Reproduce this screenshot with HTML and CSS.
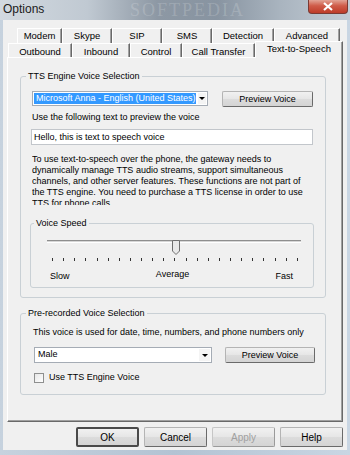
FILE: index.html
```html
<!DOCTYPE html>
<html lang="en">
<head>
    <meta charset="UTF-8">
    <title>Options</title>
    <link rel="stylesheet" href="styles.css">
</head>
<body>
    <div class="window">
        <div class="titlebar">
            <span class="title">Options</span>
            <span class="watermark">SOFTPEDIA</span>
            <div class="close-btn">
                <svg width="12" height="9" viewBox="0 0 12 9">
                    <path d="M2 1 L10 8 M10 1 L2 8" stroke="#fff" stroke-width="2.2" fill="none"/>
                </svg>
            </div>
        </div>

        <div class="client">
            <div class="tabs">
                <div class="tab-row back">
                    <div class="tab t-modem">Modem</div>
                    <div class="tab t-skype">Skype</div>
                    <div class="tab t-sip">SIP</div>
                    <div class="tab t-sms">SMS</div>
                    <div class="tab t-detect">Detection</div>
                    <div class="tab t-adv">Advanced</div>
                </div>
                <div class="tab-row front">
                    <div class="tab t-out">Outbound</div>
                    <div class="tab t-in">Inbound</div>
                    <div class="tab t-ctrl">Control</div>
                    <div class="tab t-xfer">Call Transfer</div>
                    <div class="tab t-tts active">Text-to-Speech</div>
                </div>
            </div>

            <div class="panel">
                <fieldset class="group tts-group">
                    <legend>TTS Engine Voice Selection</legend>
                    <div class="voice-row">
                        <div class="combo engine-combo focused">
                            <span class="combo-text">Microsoft Anna - English (United States)</span>
                            <span class="combo-arrow"></span>
                        </div>
                        <button class="btn preview-btn">Preview Voice</button>
                    </div>
                    <div class="hint">Use the following text to preview the voice</div>
                    <input class="textbox" type="text" value="Hello, this is text to speech voice">
                    <p class="note">
                        To use text-to-speech over the phone, the gateway needs to<br>
                        dynamically manage TTS audio streams, support simultaneous<br>
                        channels, and other server features. These functions are not part of<br>
                        the TTS engine. You need to purchase a TTS license in order to use<br>
                        TTS for phone calls.
                    </p>

                    <fieldset class="group speed-group">
                        <legend>Voice Speed</legend>
                        <div class="slider">
                            <div class="track"></div>
                            <svg class="thumb" width="8" height="15" viewBox="0 0 8 15">
                                <path d="M0.5 0.5 H7.5 V11 L4 14.5 L0.5 11 Z" fill="#e9e9e9" stroke="#6f6f6f"/>
                            </svg>
                        </div>
                        <div class="ticks" id="ticks"></div>
                        <div class="speed-labels">
                            <span>Slow</span>
                            <span class="avg">Average</span>
                            <span>Fast</span>
                        </div>
                    </fieldset>
                </fieldset>

                <fieldset class="group prerec-group">
                    <legend>Pre-recorded Voice Selection</legend>
                    <div class="info">This voice is used for date, time, numbers, and phone numbers only</div>
                    <div class="voice-row prerec-row">
                        <div class="combo male-combo">
                            <span class="combo-text">Male</span>
                            <span class="combo-arrow"></span>
                        </div>
                        <button class="btn preview-btn2">Preview Voice</button>
                    </div>
                    <label class="check-row">
                        <span class="checkbox"></span>
                        Use TTS Engine Voice
                    </label>
                </fieldset>
            </div>

            <div class="buttons">
                <button class="btn dlg-btn default">OK</button>
                <button class="btn dlg-btn">Cancel</button>
                <button class="btn dlg-btn disabled">Apply</button>
                <button class="btn dlg-btn">Help</button>
            </div>
        </div>
    </div>

    <script>
        // 23 tick marks under the speed slider
        const ticks = document.getElementById('ticks');
        for (let i = 0; i < 23; i++) {
            const tick = document.createElement('span');
            tick.className = 'tick';
            ticks.appendChild(tick);
        }
    </script>
</body>
</html>
```

FILE: styles.css
```css
* {
    box-sizing: border-box;
}
body {
    margin: 0;
    font-family: "Liberation Sans", Arial, sans-serif;
    font-size: 9px;
    color: #000;
}
.window {
    width: 350px;
    height: 455px;
    display: flex;
    flex-direction: column;
    background: linear-gradient(90deg, #c6d2de, #b3c3d3 50%, #c9d6e3);
    overflow: hidden;
}
.titlebar {
    height: 20px;
    flex-shrink: 0;
    display: flex;
    align-items: flex-start;
    position: relative;
    background: linear-gradient(90deg, #d2d9e0 0%, #c0c9d2 25%, #8d98a4 45%, #8894a1 62%, #a9b4bf 80%, #c3ccd5 100%);
}
.title {
    font-size: 12px;
    color: #1b1b1b;
    padding: 2px 0 0 3px;
}
.watermark {
    position: absolute;
    left: 130px;
    top: 0;
    font-family: "Liberation Serif", serif;
    font-size: 18px;
    line-height: 20px;
    letter-spacing: 2px;
    color: rgba(255, 255, 255, 0.18);
}
.close-btn {
    margin-left: auto;
    margin-right: 2px;
    width: 40px;
    height: 14px;
    border: 1px solid #7a3a33;
    border-top: none;
    border-radius: 0 0 4px 4px;
    background: linear-gradient(#e2a395, #cf5b48 45%, #bd3b29);
    display: flex;
    align-items: center;
    justify-content: center;
}

.client {
    height: 430px;
    margin: 0 3px 0 3px;
    padding: 8px 4px 0 4px;
    background: #f0f0f0;
}

/* tabs */
.tab-row {
    display: flex;
}
.tab-row.back {
    margin-left: 10px;
    height: 15px;
}
.tab-row.front {
    margin-left: 1px;
    margin-top: -2px;
    height: 16px;
    align-items: flex-start;
}
.tab {
    height: 15px;
    text-align: center;
    line-height: 13px;
    font-size: 9.5px;
    border-top: 1px solid #fff;
    border-left: 1px solid #fff;
    border-right: 1px solid #696969;
    box-shadow: inset -1px 0 #a0a0a0;
    background: #f0f0f0;
    white-space: nowrap;
}
.front .tab {
    margin-top: 2px;
    height: 14px;
    padding-top: 1px;
}
.front .tab.active {
    margin-top: 0;
    height: 17px;
    padding-top: 0;
    line-height: 14px;
    position: relative;
    z-index: 1;
}
.t-modem { width: 45px; }
.t-skype { width: 50px; }
.t-sip { width: 50px; }
.t-sms { width: 50px; }
.t-detect { width: 62px; }
.t-adv { width: 66px; }
.t-out { width: 64px; }
.t-in { width: 58px; }
.t-ctrl { width: 52px; }
.t-xfer { width: 73px; }
.t-tts { width: 88px; }

.panel {
    height: 365px;
    border: 1px solid;
    border-color: #fff #696969 #696969 #fff;
    box-shadow: inset -1px -1px #a0a0a0;
    padding: 13px 0 0 12px;
}

/* group boxes */
.group {
    margin: 0;
    padding: 0;
    min-width: 0;
    border: 1px solid #c9d0d5;
    border-radius: 3px;
}
.group legend {
    padding: 0 2px;
    margin-left: 5px;
    line-height: 11px;
}
.tts-group {
    width: 306px;
    padding: 9px 0 9px 0;
}
.voice-row {
    display: flex;
    align-items: flex-start;
    margin-left: 11px;
}
.combo {
    display: flex;
    height: 15px;
    padding: 1px;
    border: 1px solid #a5acb5;
    background: #fff;
}
.combo-text {
    flex: 1;
    padding-left: 2px;
    line-height: 11px;
    white-space: nowrap;
}
.combo.focused .combo-text {
    background: #3399ff;
    color: #fff;
}
.combo-arrow {
    width: 11px;
    margin-left: 2px;
    display: flex;
    align-items: center;
    justify-content: center;
    background: #f4f4f4;
}
.combo-arrow::after {
    content: "";
    border-left: 3px solid transparent;
    border-right: 3px solid transparent;
    border-top: 3px solid #000;
}
.engine-combo {
    width: 176px;
}
.btn {
    font-family: inherit;
    font-size: 9px;
    color: #000;
    height: 16px;
    padding: 0;
    border: 1px solid;
    border-color: #b4b4b4 #6a6a6a #6a6a6a #b4b4b4;
    border-radius: 2px;
    background: linear-gradient(#f1f1f1, #e6e6e6 50%, #dcdcdc 51%, #d4d4d4);
}
.preview-btn {
    width: 91px;
    margin-left: 14px;
}
.hint {
    margin: 5px 0 0 11px;
    line-height: 11px;
}
.textbox {
    display: block;
    width: 282px;
    height: 16px;
    margin: 6px 0 0 10px;
    padding: 0 2px;
    border: 1px solid #c2c6cb;
    font-family: inherit;
    font-size: 9px;
    color: #000;
    background: #fff;
}
.note {
    margin: 9px 0 0 11px;
    height: 51px;
    line-height: 11px;
    overflow: hidden;
    white-space: nowrap;
}

/* voice speed */
.speed-group {
    width: 284px;
    margin: 13px 0 0 9px;
    padding: 0 0 5px 0;
}
.speed-group legend {
    margin-left: 3px;
}
.slider {
    position: relative;
    height: 15px;
    margin: 11px 0 0 16px;
    width: 254px;
}
.track {
    margin-top: 6px;
    height: 3px;
    border-top: 1px solid #8e8e8e;
    border-bottom: 1px solid #fff;
    background: #d6d6d6;
}
.thumb {
    position: absolute;
    left: 125px;
    top: 0;
}
.ticks {
    display: flex;
    justify-content: space-between;
    width: 246px;
    height: 3px;
    margin: 3px 0 0 21px;
}
.tick {
    width: 1px;
    height: 3px;
    background: #333;
}
.speed-labels {
    display: flex;
    justify-content: space-between;
    align-items: flex-start;
    margin: 10px 0 0 19px;
    width: 243px;
    line-height: 11px;
}
.speed-labels .avg {
    margin-top: -2px;
}

/* pre-recorded */
.prerec-group {
    width: 306px;
    margin-top: 10px;
    padding: 8px 0 11px 0;
}
.info {
    margin-left: 12px;
    line-height: 11px;
}
.prerec-row {
    margin: 9px 0 0 13px;
}
.male-combo {
    width: 178px;
    height: 16px;
}
.preview-btn2 {
    width: 90px;
    margin-left: 13px;
}
.check-row {
    display: flex;
    align-items: center;
    margin: 9px 0 0 13px;
    line-height: 11px;
}
.checkbox {
    width: 10px;
    height: 10px;
    margin-right: 5px;
    border: 1px solid #8e8f8f;
    background: linear-gradient(135deg, #e6e6e6, #fff);
}

/* dialog buttons */
.buttons {
    display: flex;
    justify-content: flex-end;
    gap: 5px;
    margin-top: 5px;
}
.dlg-btn {
    width: 63px;
    height: 20px;
    font-size: 10px;
}
.dlg-btn.default {
    border: 2px solid #4a4a4a;
}
.dlg-btn.disabled {
    color: #a0a0a0;
    border-color: #c6c6c6 #9a9a9a #9a9a9a #c6c6c6;
}
```
